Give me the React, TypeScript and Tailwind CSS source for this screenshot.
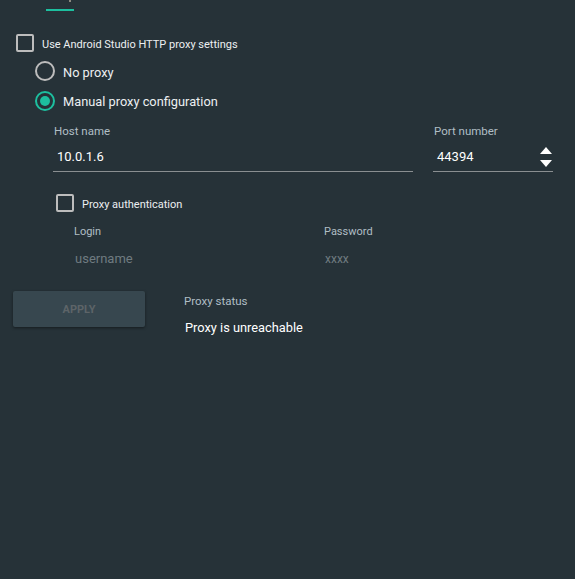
import { useState } from "react";

function Checkbox({ checked = false }: { checked?: boolean }) {
  return (
    <span
      className={`inline-block h-[18px] w-[18px] shrink-0 rounded-[2px] border-2 ${
        checked ? "border-[#1dbf9f] bg-[#1dbf9f]" : "border-[#bdbdbd]"
      }`}
    />
  );
}

function Radio({ checked = false }: { checked?: boolean }) {
  return (
    <span
      className={`flex h-[20px] w-[20px] shrink-0 items-center justify-center rounded-full border-2 ${
        checked ? "border-[#1dbf9f]" : "border-[#bdbdbd]"
      }`}
    >
      {checked && <span className="h-[10px] w-[10px] rounded-full bg-[#1dbf9f]" />}
    </span>
  );
}

export default function App() {
  const [mode] = useState<"none" | "manual">("manual");

  return (
    <div className="relative h-[579px] w-[575px] overflow-hidden bg-[#263238] font-['Roboto',sans-serif] text-[#eceff1]">
      {/* tab indicator of the clipped tab strip above */}
      <div className="ml-[46px] flex h-[12px] flex-col">
        <div className="ml-[23px] h-[2px] w-[2px] bg-[#8d8a80]" />
        <div className="mt-[7px] h-[2px] w-[28px] bg-[#1dbf9f]" />
      </div>

      <div className="ml-[16px] mt-[22px] flex items-center gap-[8px]">
        <Checkbox />
        <span className="pt-[3px] text-[11px] leading-[14px]">Use Android Studio HTTP proxy settings</span>
      </div>

      <div className="ml-[35px] mt-[9px] flex flex-col gap-[10px]">
        <div className="flex items-center gap-[8px]">
          <Radio checked={mode === "none"} />
          <span className="pt-[3px] text-[12.8px] leading-[16px]">No proxy</span>
        </div>
        <div className="flex items-center gap-[8px]">
          <Radio checked={mode === "manual"} />
          <span className="pt-[2px] text-[12.8px] leading-[16px]">Manual proxy configuration</span>
        </div>
      </div>

      <div className="ml-[53px] mt-[13px] flex gap-[20px]">
        <div className="flex w-[360px] flex-col">
          <span className="pl-[1px] text-[11.5px] leading-[14px] text-[#b0bec5]">Host name</span>
          <div className="mt-[4px] flex h-[30px] items-center border-b border-[#8a8f91] pl-[4px]">
            <span className="text-[13px] leading-[18px] text-white">10.0.1.6</span>
          </div>
        </div>
        <div className="flex w-[120px] flex-col">
          <span className="pl-[1px] text-[11.5px] leading-[14px] text-[#b0bec5]">Port number</span>
          <div className="mt-[4px] flex h-[30px] items-center justify-between border-b border-[#8a8f91] pl-[4px] pr-[1px]">
            <span className="text-[13px] leading-[18px] text-white">44394</span>
            <div className="flex flex-col gap-[6px]">
              <svg width="12" height="7" viewBox="0 0 12 7">
                <path d="M6 0 L12 7 L0 7 Z" fill="#ffffff" />
              </svg>
              <svg width="12" height="7" viewBox="0 0 12 7">
                <path d="M0 0 L12 0 L6 7 Z" fill="#ffffff" />
              </svg>
            </div>
          </div>
        </div>
      </div>

      <div className="ml-[56px] mt-[22px] flex items-center gap-[8px]">
        <Checkbox />
        <span className="pt-[3px] text-[11px] leading-[14px]">Proxy authentication</span>
      </div>

      <div className="ml-[74px] mt-[13px] flex">
        <div className="flex w-[250px] flex-col">
          <span className="text-[11px] leading-[14px] text-[#b0bec5]">Login</span>
          <span className="mt-[11px] pl-[1px] text-[13px] leading-[18px] text-[#6f7b80]">username</span>
        </div>
        <div className="flex flex-col">
          <span className="text-[11px] leading-[14px] text-[#b0bec5]">Password</span>
          <span className="mt-[11px] pl-[1px] text-[12px] leading-[18px] text-[#6f7b80]">xxxx</span>
        </div>
      </div>

      <div className="ml-[13px] mt-[23px] flex items-start">
        <button className="h-[36px] w-[132px] rounded-[2px] bg-[#37474f] pt-[2px] text-[11px] font-bold text-[#5d6468] shadow-[0_1px_3px_rgba(0,0,0,0.45)]">
          APPLY
        </button>
        <div className="ml-[39px] mt-[3px] flex flex-col">
          <span className="text-[11.5px] leading-[14px] text-[#b0bec5]">Proxy status</span>
          <span className="mt-[11px] pl-[1px] text-[12.8px] leading-[18px] text-white">Proxy is unreachable</span>
        </div>
      </div>
    </div>
  );
}
